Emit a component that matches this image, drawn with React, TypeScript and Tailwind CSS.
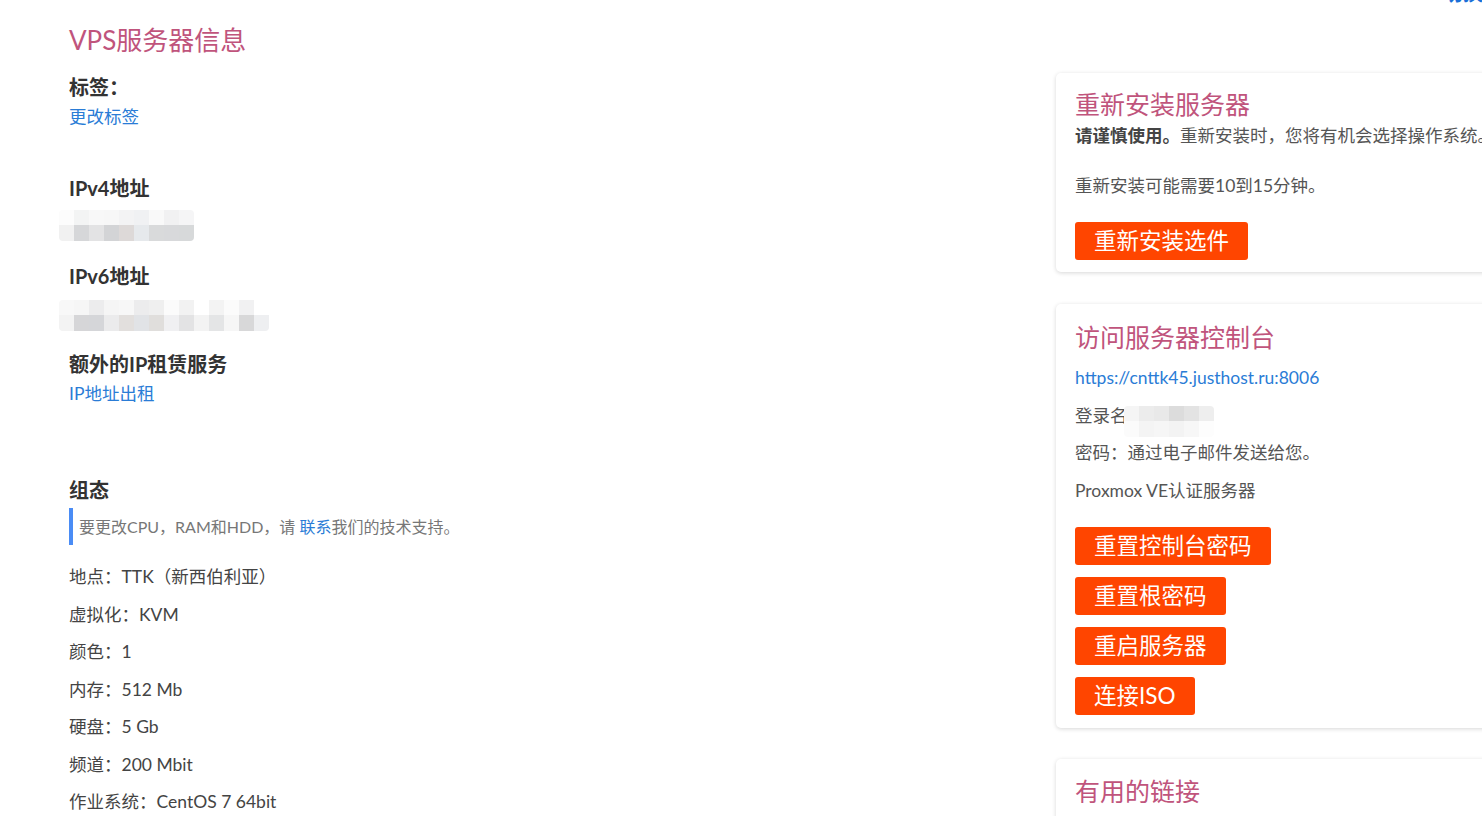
import React from "react";

const FONT = "font-['Lato','Noto_Sans_CJK_SC',sans-serif]";

// pixelated placeholder for hidden addresses
function Blur({ cols, shades }: { cols: number; shades: string[] }): React.ReactElement {
  const top = shades.slice(0, cols);
  const bottom = shades.slice(cols, cols * 2);
  return (
    <div className="flex w-fit flex-col overflow-hidden rounded-[4px]">
      <div className="flex">
        {top.map((c, i) => (
          <div key={i} className="h-[15px] w-[15px]" style={{ backgroundColor: c }} />
        ))}
      </div>
      <div className="flex">
        {bottom.map((c, i) => (
          <div key={i} className="h-[16px] w-[15px]" style={{ backgroundColor: c }} />
        ))}
      </div>
    </div>
  );
}

const ipv4Shades = [
  "#fcfcfc", "#f3f4f4", "#f8f8f8", "#f7f7f7", "#f3f3f4", "#f0f1f3", "#f9f9f9", "#f1f1f2", "#f5f5f6",
  "#f1f1f1", "#d6d7d9", "#e3e3e4", "#d3d4d6", "#ddd9d8", "#e6e9ec", "#d9dadb", "#d8d9db", "#d7d9da",
];

const ipv6Shades = [
  "#f8f8f8", "#f6f6f6", "#ececed", "#f5f5f5", "#f7f7f7", "#ececed", "#efefef", "#fbfbfb", "#f2f2f2", "#ffffff", "#f3f3f3", "#fbfbfb", "#f1f1f2", "#ffffff",
  "#f3f3f3", "#d6d6d8", "#d5d6d9", "#ebebec", "#e2dfdd", "#e1e3e6", "#e0dedc", "#f0f0f2", "#e3e3e4", "#f3f3f3", "#e4e5e6", "#f6f6f6", "#d8d8d9", "#eeeff1",
];

const loginShades = [
  "#f5f5f5", "#ececec", "#e9e9e9", "#dcdcdc", "#e3e3e3", "#eeeeee",
  "#fbfbfb", "#f4f4f4", "#f6f6f6", "#f3f3f3", "#f7f7f7", "#fdfdfd",
];

function OrangeButton({ label }: { label: string }): React.ReactElement {
  return (
    <button
      type="button"
      className="h-[38px] w-fit rounded-[3px] bg-[#ff4500] px-[19px] text-[22.5px] leading-[38px] text-white"
    >
      {label}
    </button>
  );
}

const specs = [
  "地点：TTK（新西伯利亚）",
  "虚拟化：KVM",
  "颜色：1",
  "内存：512 Mb",
  "硬盘：5 Gb",
  "频道：200 Mbit",
  "作业系统：CentOS 7 64bit",
];

export default function App(): React.ReactElement {
  return (
    <div className={`${FONT} flex h-[816px] w-[1482px] items-start overflow-hidden bg-white text-[#555]`}>
      {/* Left column: server info */}
      <div className="w-[1056px] shrink-0 pl-[69px] pt-[25px]">
        <h1 className="text-[26px] leading-[30px] text-[#c0547c]">VPS服务器信息</h1>

        <h3 className="mt-[17px] text-[20px] font-bold leading-[30px] text-[#333]">标签：</h3>
        <a className="block text-[17.5px] leading-[30px] text-[#2a7cd6]">更改标签</a>

        <h3 className="mt-[41px] text-[20px] font-bold leading-[30px] text-[#333]">IPv4地址</h3>
        <div className="ml-[-10px] mt-[7px]">
          <Blur cols={9} shades={ipv4Shades} />
        </div>

        <h3 className="mt-[20px] text-[20px] font-bold leading-[30px] text-[#333]">IPv6地址</h3>
        <div className="ml-[-10px] mt-[9px]">
          <Blur cols={14} shades={ipv6Shades} />
        </div>

        <h3 className="mt-[18px] text-[20px] font-bold leading-[30px] text-[#333]">额外的IP租赁服务</h3>
        <a className="block text-[17.5px] leading-[30px] text-[#2a7cd6]">IP地址出租</a>

        <h3 className="mt-[66px] text-[20px] font-bold leading-[30px] text-[#333]">组态</h3>
        <blockquote className="mt-[3px] flex h-[37px] items-center border-l-4 border-[#4a8cf5] pl-[6px] text-[16px] text-[#777]">
          要更改CPU，RAM和HDD，请&nbsp;<a className="text-[#2a7cd6]">联系</a>我们的技术支持。
        </blockquote>

        <ul className="mt-[13px]">
          {specs.map((s) => (
            <li key={s} className="h-[37.5px] text-[17.5px] leading-[37.5px] text-[#444]">
              {s}
            </li>
          ))}
        </ul>
      </div>

      {/* Right column: action cards */}
      <div className="w-[520px] shrink-0">
        <div className="-mt-[19px] h-[24px] pl-[387px] text-[20px] font-bold leading-[24px] text-[#1a6fd8]">
          切换
        </div>

        <div className="mt-[68px] rounded-[5px] bg-white px-[19px] pb-[12px] pt-[16px] shadow-[0_1px_4px_rgba(0,0,0,0.16)]">
          <h2 className="text-[25px] leading-[30px] text-[#c0547c]">重新安装服务器</h2>
          <p className="mt-[4px] whitespace-nowrap text-[17.5px] leading-[26px]">
            <b className="text-[#444]">请谨慎使用。</b>重新安装时，您将有机会选择操作系统。
          </p>
          <p className="mt-[24px] text-[17.5px] leading-[26px]">重新安装可能需要10到15分钟。</p>
          <div className="mt-[23px]">
            <OrangeButton label="重新安装选件" />
          </div>
        </div>

        <div className="mt-[32px] rounded-[5px] bg-white px-[19px] pb-[13px] pt-[18px] shadow-[0_1px_4px_rgba(0,0,0,0.16)]">
          <h2 className="text-[25px] leading-[30px] text-[#c0547c]">访问服务器控制台</h2>
          <a className="mt-[13px] block text-[17.5px] leading-[26px] text-[#2a7cd6]">
            https://cnttk45.justhost.ru:8006
          </a>
          <div className="mt-[12px] flex h-[26px] items-start text-[17.5px] leading-[26px]">
            <span>登录名</span>
            <div className="ml-[-4px] mt-[3px]">
              <Blur cols={6} shades={loginShades} />
            </div>
          </div>
          <p className="mt-[11px] text-[17.5px] leading-[26px]">密码：通过电子邮件发送给您。</p>
          <p className="mt-[12px] text-[17.5px] leading-[26px]">Proxmox VE认证服务器</p>
          <div className="mt-[23px] flex flex-col gap-[12px]">
            <OrangeButton label="重置控制台密码" />
            <OrangeButton label="重置根密码" />
            <OrangeButton label="重启服务器" />
            <OrangeButton label="连接ISO" />
          </div>
        </div>

        <div className="mt-[31px] h-[120px] rounded-[5px] bg-white px-[19px] pt-[17px] shadow-[0_1px_4px_rgba(0,0,0,0.16)]">
          <h2 className="text-[25px] leading-[30px] text-[#c0547c]">有用的链接</h2>
        </div>
      </div>
    </div>
  );
}
